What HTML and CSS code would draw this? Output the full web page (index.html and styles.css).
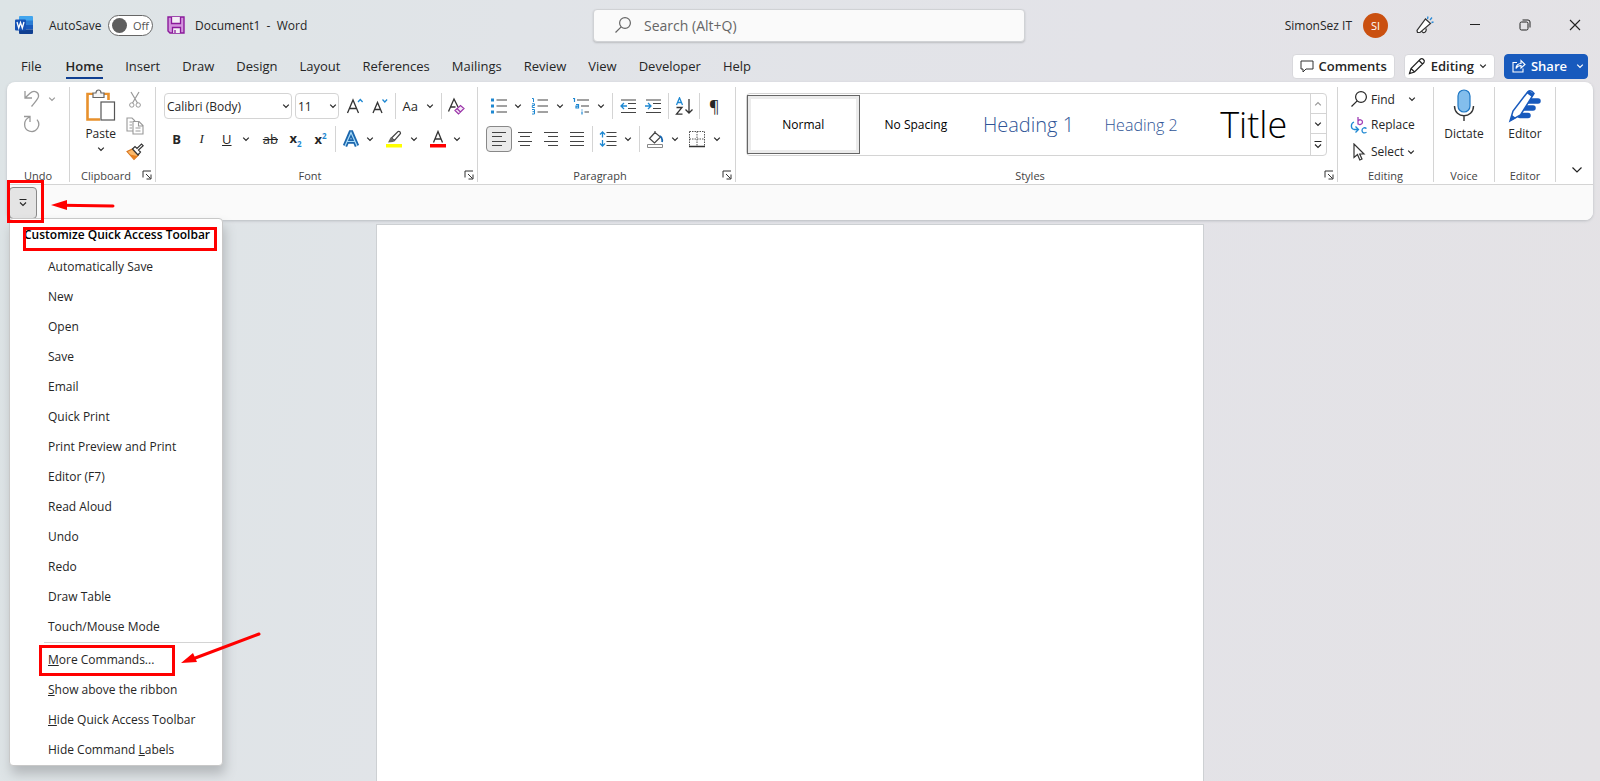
FILE: index.html
```html
<!DOCTYPE html>
<html lang="en">
    <head>
        <meta charset="UTF-8">
        <title>Document1 - Word</title>
        <link rel="stylesheet" href="styles.css">
    </head>
    <body>
        <svg class="defs" width="0" height="0" aria-hidden="true">
            <symbol id="chev" viewBox="0 0 8 8"><path d="M1.2 2.6 4 5.4 6.8 2.6" fill="none" stroke="currentColor" stroke-width="1.2"/></symbol>
            <symbol id="more" viewBox="0 0 10 10"><path d="M1.5 1.5h7M2 4.5l3 3 3-3" fill="none" stroke="currentColor" stroke-width="1.1"/></symbol>
            <symbol id="launch" viewBox="0 0 10 10"><path d="M1 7.5V1h8M4 4l4.5 4.5M9 4.5V9H4.5" fill="none" stroke="currentColor"/></symbol>
            <symbol id="glass" viewBox="0 0 18 18"><path d="M7.2 10.8 1.5 16.5" fill="none" stroke="currentColor" stroke-width="1.2"/><circle cx="11" cy="7" r="5.4" fill="none" stroke="currentColor" stroke-width="1.2"/></symbol>
        </svg>

        <header class="titlebar">
            <svg class="ic18" viewBox="0 0 18 18">
                <path d="M5 0h12a1 1 0 0 1 1 1v4H4V1a1 1 0 0 1 1-1z" fill="#41a5ee"/>
                <path d="M4 4.5h14V9H4z" fill="#2b7cd3"/>
                <path d="M4 9h14v4.500H4z" fill="#185abd"/>
                <path d="M4 13.500h14V17a1 1 0 0 1-1 1H5a1 1 0 0 1-1-1z" fill="#103f91"/>
                <rect x="0" y="3.500" width="11" height="11" rx="1" fill="#1753b5"/>
                <path d="M2 6l1.700 6L5.500 6.500 7.300 12 9 6" fill="none" stroke="#fff" stroke-width="1.300"/>
            </svg>
            <label class="switch"><span>AutoSave</span><span class="pill"><input type="checkbox" role="switch">Off</span></label>
            <button class="save" aria-label="Save">
                <svg class="ic18" viewBox="0 0 18 18"><path d="M1 1h16v16H3l-2-2z" fill="#d394dd" stroke="#8b1a9b" stroke-width="1.400"/><path d="M4.500 1v6.500h9V1M5.500 17v-5.500h8V17" fill="#f3eef5" stroke="#8b1a9b" stroke-width="1.300"/><path d="M8 17v-3" stroke="#8b1a9b" stroke-width="1.300"/></svg>
            </button>
            <span class="docname">Document1&nbsp; - &nbsp;Word</span>
            <label class="search">
                <svg class="ic18" viewBox="0 0 18 18"><use href="#glass"/></svg>
                <input type="text" placeholder="Search (Alt+Q)" aria-label="Search">
            </label>
            <div class="account">
                <span>SimonSez IT</span>
                <span class="avatar">SI</span>
                <button class="win" aria-label="Coming soon">
                    <svg class="ic18" viewBox="0 0 18 18"><path d="M1.500 16.500 1 14.500 9.500 3l5 4.500L4 16.500zM6 15.500c1.500 2.500 5 .5 4-3" fill="#fff" stroke="#333" stroke-width="1.200"/><path d="M11.500 3 12 .5M14 4l2-2.500M15.500 6.500l2-.500" stroke="#2b8ad6" stroke-width="1.300"/></svg>
                </button>
                <button class="win" aria-label="Minimize"><svg class="ic12" viewBox="0 0 12 12"><path d="M1 5.500h10" stroke="#222"/></svg></button>
                <button class="win" aria-label="Restore"><svg class="ic12" viewBox="0 0 12 12"><rect x="1" y="3" width="8" height="8" rx="1.500" fill="none" stroke="#222"/><path d="M3.500 1H9a2 2 0 0 1 2 2v5.500" fill="none" stroke="#222"/></svg></button>
                <button class="win" aria-label="Close"><svg class="ic12" viewBox="0 0 12 12"><path d="M1 1l10 10M11 1 1 11" stroke="#222" stroke-width="1.100"/></svg></button>
            </div>
        </header>

        <nav class="tabs">
            <a href="#file">File</a>
            <a href="#home" class="active">Home</a>
            <a href="#insert">Insert</a>
            <a href="#draw">Draw</a>
            <a href="#design">Design</a>
            <a href="#layout">Layout</a>
            <a href="#references">References</a>
            <a href="#mailings">Mailings</a>
            <a href="#review">Review</a>
            <a href="#view">View</a>
            <a href="#developer">Developer</a>
            <a href="#help">Help</a>
            <div class="actions">
                <button class="action"><svg class="ic14" viewBox="0 0 14 14"><path d="M1 2h12v8H6l-3 3v-3H1z" fill="none" stroke="#333"/></svg>Comments</button>
                <button class="action mode"><svg class="ic18" viewBox="0 0 18 18"><path d="M1.500 16.500l1.500-5L12.500 2q1.500-1 3 .5t.5 3L6.500 15zM3 11.500 6.500 15M11 3.500 14.500 7" fill="none" stroke="#222" stroke-width="1.200"/></svg>Editing<svg class="ic8"><use href="#chev"/></svg></button>
                <button class="action share"><svg class="ic14" viewBox="0 0 14 14"><path d="M5 3.500H1v9.500h10V9.500M4 9.500c0-3 2-5 5-5V1.500L13 5.500 9 9V6.500C7 6.500 5 7.500 4 9.500z" fill="none" stroke="#fff" stroke-width="1.100"/></svg>Share<svg class="ic8"><use href="#chev"/></svg></button>
            </div>
        </nav>

        <main class="ribbon">
            <div class="groups">
                <section class="group undo">
                    <div class="body">
                        <div class="pair">
                            <button class="tb grey" aria-label="Undo"><svg class="ic18" viewBox="0 0 18 18"><path d="M2 1v7h7M2 8 7 3.300C11-.5 16 2 15.500 6.500 15.200 9 12 12 8.500 16.500" fill="none" stroke="currentColor" stroke-width="1.300"/></svg></button>
                            <button class="chev grey" aria-label="Undo list"><svg class="ic8"><use href="#chev"/></svg></button>
                        </div>
                        <button class="tb grey" aria-label="Redo"><svg class="ic18" viewBox="0 0 18 18"><path d="M1 1.500h6V7M6.500 2C0 5 0 14 6.500 16.200c7 2 12-6 7.500-11.500" fill="none" stroke="currentColor" stroke-width="1.300"/></svg></button>
                    </div>
                    <div class="foot"><span>Undo</span></div>
                </section>

                <section class="group clip">
                    <div class="body">
                        <button class="big">
                            <svg width="30" height="34" viewBox="0 0 30 34"><path d="M7 5H1.500v25.500H14M17 5h5.500v6" fill="none" stroke="#e8912d" stroke-width="2.600"/><path d="M3 6h18v6h-6v17H3z" fill="#fff"/><path d="M7 8.500V4h3c0-4 5-4 5 0h3v4.500z" fill="#f5f5f5" stroke="#666" stroke-width="1.200"/><rect x="15" y="13" width="13.500" height="18" fill="#fff" stroke="#555" stroke-width="1.200"/></svg>
                            Paste
                            <svg class="ic8"><use href="#chev"/></svg>
                        </button>
                        <div class="stack">
                            <button class="tb grey" aria-label="Cut"><svg class="ic18" viewBox="0 0 18 18"><path d="M5 1l6.500 11M13 1 6.500 12" stroke="currentColor" stroke-width="1.200"/><circle cx="5.800" cy="14" r="2.200" fill="none" stroke="currentColor"/><circle cx="12.200" cy="14" r="2.200" fill="none" stroke="currentColor"/></svg></button>
                            <button class="tb grey" aria-label="Copy"><svg class="ic18" viewBox="0 0 18 18"><path d="M7 14H1V1h5l3 3M7 4.500h6l4 4V17H7zM12.500 5v4H17M9.500 11h5M9.500 14h5M3.500 5H6M3.500 8H6M3.500 11H6" fill="none" stroke="currentColor" stroke-width="1.100"/></svg></button>
                            <button class="tb" aria-label="Format Painter"><svg class="ic18" viewBox="0 0 18 18"><path d="M1 8.500 6.500 6l6 6-4.500 4.500z" fill="#fbb96c" stroke="#d9741a" stroke-width="1.100"/><path d="M4 11.500 8 16l3-3z" fill="#e8801e"/><path d="M6.500 6 9 3.500l2 2L15.500 1l1.700 1.700L12.500 7l2 2-2.500 3z" fill="#fff" stroke="#333" stroke-width="1.200"/></svg></button>
                        </div>
                    </div>
                    <div class="foot"><span>Clipboard</span><button class="launch" aria-label="Clipboard settings"><svg class="ic10"><use href="#launch"/></svg></button></div>
                </section>

                <section class="group font">
                    <div class="body rows">
                        <div class="row">
                            <span class="pick family"><select aria-label="Font"><option>Calibri (Body)</option></select><svg class="ic8"><use href="#chev"/></svg></span>
                            <span class="pick size"><select aria-label="Font size"><option>11</option></select><svg class="ic8"><use href="#chev"/></svg></span>
                            <button class="tb" aria-label="Increase Font Size"><svg class="ic18" viewBox="0 0 18 18"><path d="M1.500 16 7 3l5.500 13M3.300 11.500h7.400" fill="none" stroke="#333" stroke-width="1.300"/><path d="M12 5l2.300-2.500L16.600 5" fill="none" stroke="#1e88d2" stroke-width="1.300"/></svg></button>
                            <button class="tb" aria-label="Decrease Font Size"><svg class="ic18" viewBox="0 0 18 18"><path d="M2 16 6.500 5.500 11 16M3.500 12.500h6" fill="none" stroke="#333" stroke-width="1.300"/><path d="M11.500 2.500 13.800 5l2.300-2.500" fill="none" stroke="#1e88d2" stroke-width="1.300"/></svg></button>
                            <i class="sep"></i>
                            <button class="tb case">Aa</button>
                            <button class="chev" aria-label="Case options"><svg class="ic8"><use href="#chev"/></svg></button>
                            <i class="sep"></i>
                            <button class="tb" aria-label="Clear Formatting"><svg class="ic18" viewBox="0 0 18 18"><path d="M1.500 14.500 7 2l4 8M3.500 10h5" fill="none" stroke="#333" stroke-width="1.300"/><path d="M8 13.500 13.500 8.500 17 11.500 11.500 17zM10 11.500l3.500 3.500" fill="#f6eaf8" stroke="#9a33a8" stroke-width="1.200"/></svg></button>
                        </div>
                        <div class="row wide">
                            <button class="tb"><b>B</b></button>
                            <button class="tb ital"><i>I</i></button>
                            <button class="tb"><u>U</u></button>
                            <button class="chev" aria-label="Underline options"><svg class="ic8"><use href="#chev"/></svg></button>
                            <button class="tb"><s>ab</s></button>
                            <button class="tb"><b>x<sub>2</sub></b></button>
                            <button class="tb"><b>x<sup>2</sup></b></button>
                            <i class="sep"></i>
                            <button class="tb" aria-label="Text Effects"><svg class="ic18" viewBox="0 0 18 18"><path d="M3 16 8.700 2.500h.6L15 16M5.500 11.500h7" fill="none" stroke="#1b66ad" stroke-width="4.500"/><path d="M3 16 9 2.500 15 16M5.500 11.500h7" fill="none" stroke="#a9dbf8" stroke-width="1.200"/></svg></button>
                            <button class="chev" aria-label="Effect options"><svg class="ic8"><use href="#chev"/></svg></button>
                            <button class="tb" aria-label="Highlight"><svg class="ic18" viewBox="0 0 18 18"><path d="M6.500 8 13 1.500q2.500-.5 2.500 2L9.500 10.500z" fill="#fff" stroke="#444" stroke-width="1.200"/><path d="M5.500 7.500 10 11l-2 1-5 .5z" fill="#666"/><path d="M1 14h16v3.500H1z" fill="#ff0"/></svg></button>
                            <button class="chev" aria-label="Highlight colors"><svg class="ic8"><use href="#chev"/></svg></button>
                            <button class="tb" aria-label="Font Color"><svg class="ic18" viewBox="0 0 18 18"><path d="M4.500 12.500 9 1.500l4.500 11M6 9h6" fill="none" stroke="#333" stroke-width="1.300"/><path d="M1 14h16v3.500H1z" fill="#f00"/></svg></button>
                            <button class="chev" aria-label="Font colors"><svg class="ic8"><use href="#chev"/></svg></button>
                        </div>
                    </div>
                    <div class="foot"><span>Font</span><button class="launch" aria-label="Font settings"><svg class="ic10"><use href="#launch"/></svg></button></div>
                </section>

                <section class="group para">
                    <div class="body rows">
                        <div class="row">
                            <button class="tb" aria-label="Bullets"><svg class="ic18" viewBox="0 0 18 18"><path d="M1 1.500h3v3H1zM1 7.500h3v3H1zM1 13.500h3v3H1z" fill="#1e88d2"/><path d="M6.500 3H17M6.500 9H17M6.500 15H17" stroke="#444" stroke-width="1.200"/></svg></button>
                            <button class="chev" aria-label="Bullet library"><svg class="ic8"><use href="#chev"/></svg></button>
                            <button class="tb" aria-label="Numbering"><svg class="ic18" viewBox="0 0 18 18"><path d="M1 1.500h1.500V5M1 6.800h2.500v1.700H1.300v2h2.500M1 12.500h2.500v4.500H1M1.500 14.700h2" fill="none" stroke="#1e88d2"/><path d="M6.500 3H17M6.500 9H17M6.500 15H17" stroke="#444" stroke-width="1.200"/></svg></button>
                            <button class="chev" aria-label="Numbering library"><svg class="ic8"><use href="#chev"/></svg></button>
                            <button class="tb" aria-label="Multilevel List"><svg class="ic18" viewBox="0 0 18 18"><path d="M1 1.500h1.500V5M4 7.500h2.500V11H4V9.200h2.500M10 12.500v1M10 14.500v3" fill="none" stroke="#1e88d2" stroke-width="1.200"/><path d="M5 3h12M9 9h8M12.500 15H17" stroke="#444" stroke-width="1.200"/></svg></button>
                            <button class="chev" aria-label="List library"><svg class="ic8"><use href="#chev"/></svg></button>
                            <i class="sep"></i>
                            <button class="tb" aria-label="Decrease Indent"><svg class="ic18" viewBox="0 0 18 18"><path d="M2 3h15M9 6.500h8M9 11.500h8M2 15.500h15" stroke="#444" stroke-width="1.200"/><path d="M8 9H2m3-3L2 9l3 3" fill="none" stroke="#1e88d2" stroke-width="1.300"/></svg></button>
                            <button class="tb" aria-label="Increase Indent"><svg class="ic18" viewBox="0 0 18 18"><path d="M2 3h15M9 6.500h8M9 11.500h8M2 15.500h15" stroke="#444" stroke-width="1.200"/><path d="M1 9h6M4 6l3 3-3 3" fill="none" stroke="#1e88d2" stroke-width="1.300"/></svg></button>
                            <i class="sep"></i>
                            <button class="tb" aria-label="Sort"><svg class="ic18" viewBox="0 0 18 18"><path d="M1.500 8 4.500.8 7.500 8M2.500 5.500h4" fill="none" stroke="#1e88d2" stroke-width="1.300"/><path d="M1.500 10.500h5.500l-5.500 6.700h6M14 2v14M10.500 12.500 14 16l3.500-3.500" fill="none" stroke="#333" stroke-width="1.300"/></svg></button>
                            <i class="sep"></i>
                            <button class="tb pil">¶</button>
                        </div>
                        <div class="row">
                            <button class="tb on" aria-label="Align Left"><svg class="ic18" viewBox="0 0 18 18"><path d="M2 2.500h14M2 6.500h10M2 11.500h14M2 15.500h10" stroke="#444" stroke-width="1.200"/></svg></button>
                            <button class="tb" aria-label="Center"><svg class="ic18" viewBox="0 0 18 18"><path d="M2 2.500h14M4 6.500h10M2 11.500h14M4 15.500h10" stroke="#444" stroke-width="1.200"/></svg></button>
                            <button class="tb" aria-label="Align Right"><svg class="ic18" viewBox="0 0 18 18"><path d="M2 2.500h14M6 6.500h10M2 11.500h14M6 15.500h10" stroke="#444" stroke-width="1.200"/></svg></button>
                            <button class="tb" aria-label="Justify"><svg class="ic18" viewBox="0 0 18 18"><path d="M2 2.500h14M2 6.500h14M2 11.500h14M2 15.500h14" stroke="#444" stroke-width="1.200"/></svg></button>
                            <i class="sep"></i>
                            <button class="tb" aria-label="Line Spacing"><svg class="ic18" viewBox="0 0 18 18"><path d="M7.500 2.500h10M7.500 6.500h10M7.500 11.500h10M7.500 15.500h10" stroke="#444" stroke-width="1.200"/><path d="M3.500 2v5.500M1 4.500 3.500 2 6 4.500M3.500 10v6M1 13.500 3.500 16 6 13.500" fill="none" stroke="#1e88d2" stroke-width="1.300"/></svg></button>
                            <button class="chev" aria-label="Spacing options"><svg class="ic8"><use href="#chev"/></svg></button>
                            <i class="sep"></i>
                            <button class="tb" aria-label="Shading"><svg class="ic18" viewBox="0 0 18 18"><path d="M9 1v3M9 2.500 3.500 8.500l5 4.500 6-6z" fill="#fff" stroke="#444" stroke-width="1.200"/><path d="M14 6q3 2 2 6" fill="none" stroke="#1566b0" stroke-width="1.800"/><path d="M1.500 14.500h15v3h-15z" fill="#fff" stroke="#888"/></svg></button>
                            <button class="chev" aria-label="Shading colors"><svg class="ic8"><use href="#chev"/></svg></button>
                            <button class="tb" aria-label="Borders"><svg class="ic18" viewBox="0 0 18 18"><path d="M1.500 1.500h15M1.500 1.500v14M16.500 1.500v14M9 1.500v14M1.500 9h15" stroke="#555" stroke-dasharray="1.500 1"/><path d="M1 16.500h16" stroke="#333" stroke-width="1.500"/></svg></button>
                            <button class="chev" aria-label="Border options"><svg class="ic8"><use href="#chev"/></svg></button>
                        </div>
                    </div>
                    <div class="foot"><span>Paragraph</span><button class="launch" aria-label="Paragraph settings"><svg class="ic10"><use href="#launch"/></svg></button></div>
                </section>

                <section class="group styles">
                    <div class="body">
                        <div class="gallery">
                            <button class="style normal">Normal</button>
                            <button class="style">No Spacing</button>
                            <button class="style h1">Heading 1</button>
                            <button class="style h2">Heading 2</button>
                            <button class="style title">Title</button>
                            <div class="scroll">
                                <button class="grey" aria-label="Previous styles"><svg class="ic8 up"><use href="#chev"/></svg></button>
                                <button aria-label="Next styles"><svg class="ic8"><use href="#chev"/></svg></button>
                                <button aria-label="All styles"><svg class="ic10"><use href="#more"/></svg></button>
                            </div>
                        </div>
                    </div>
                    <div class="foot"><span>Styles</span><button class="launch" aria-label="Styles settings"><svg class="ic10"><use href="#launch"/></svg></button></div>
                </section>

                <section class="group editing">
                    <div class="body">
                        <button class="cmd find"><svg class="ic18"><use href="#glass"/></svg>Find<svg class="ic8"><use href="#chev"/></svg></button>
                        <button class="cmd"><svg class="ic18" viewBox="0 0 18 18"><path d="M8 1v7.500M8 5c1-2 4.500-1.500 4.500 1S9 9.500 8 7.500" fill="none" stroke="#a13fb5" stroke-width="1.300"/><path d="M16.500 12.500c-2-1.500-4.500-.5-4.500 2s2.500 3 4.500 1.800M4 6C.5 7.500.5 12.500 4 13.500h4M5.500 10.500l3 3-3 3" fill="none" stroke="#1e88d2" stroke-width="1.300"/></svg>Replace</button>
                        <button class="cmd"><svg class="ic18" viewBox="0 0 18 18"><path d="M4 1v13.500l3.500-3 2.300 5.500 2.200-1-2.300-5H14z" fill="#fff" stroke="#333" stroke-width="1.200"/></svg>Select<svg class="ic8"><use href="#chev"/></svg></button>
                    </div>
                    <div class="foot"><span>Editing</span></div>
                </section>

                <section class="group single">
                    <div class="body">
                        <button class="big"><svg width="22" height="34" viewBox="0 0 22 34"><rect x="5" y="1" width="12" height="22" rx="6" fill="#83beec" stroke="#1e77c4" stroke-width="1.200"/><path d="M1.500 17c0 13 19 13 19 0M11 26.500V32" fill="none" stroke="#333" stroke-width="1.400"/></svg>Dictate</button>
                    </div>
                    <div class="foot"><span>Voice</span></div>
                </section>

                <section class="group single">
                    <div class="body">
                        <button class="big"><svg width="34" height="34" viewBox="0 0 34 34"><path d="M20 12h10M16 19h9M12 26.500h8" stroke="#185abd" stroke-width="5.500" stroke-linecap="round"/><path d="M2 32l3-10L20 2.500q3-2 6 2L12.500 26z" fill="#fff" stroke="#185abd" stroke-width="1.500"/><path d="M2 32l2-6 4 3zM18.500 4 21 1.500l5 3.500-2 3z" fill="#185abd"/></svg>Editor</button>
                    </div>
                    <div class="foot"><span>Editor</span></div>
                </section>

                <button class="collapse" aria-label="Collapse ribbon"><svg class="ic12" viewBox="0 0 12 12"><path d="M1.500 3.500 6 8l4.500-4.500" fill="none" stroke="#222" stroke-width="1.200"/></svg></button>
            </div>

            <div class="qat">
                <button class="qat-btn" aria-label="Customize Quick Access Toolbar"><svg class="ic10"><use href="#more"/></svg></button>
                <div class="menu">
                    <h2>Customize Quick Access Toolbar</h2>
                    <button>Automatically Save</button>
                    <button>New</button>
                    <button>Open</button>
                    <button>Save</button>
                    <button>Email</button>
                    <button>Quick Print</button>
                    <button>Print Preview and Print</button>
                    <button>Editor (F7)</button>
                    <button>Read Aloud</button>
                    <button>Undo</button>
                    <button>Redo</button>
                    <button>Draw Table</button>
                    <button>Touch/Mouse Mode</button>
                    <hr>
                    <button><u>M</u>ore Commands...</button>
                    <button><u>S</u>how above the ribbon</button>
                    <button><u>H</u>ide Quick Access Toolbar</button>
                    <button>Hide Command <u>L</u>abels</button>
                </div>
            </div>
        </main>

        <div class="workspace">
            <div class="page"></div>
        </div>

        <svg class="marks" width="280" height="700" aria-hidden="true">
            <g fill="none" stroke="#f00" stroke-width="3">
                <rect x="8.500" y="181.500" width="34" height="40"/>
                <rect x="24.500" y="228.500" width="191" height="21"/>
                <rect x="40.500" y="646.500" width="133" height="28"/>
                <path d="M62 205.300 113 206M190 660 259 634" stroke-linecap="round"/>
            </g>
            <path d="M51 205l16-5v10zM181 663l12-10 4 9z" fill="#f00"/>
        </svg>
    </body>
</html>
```

FILE: styles.css
```css
*{
    box-sizing: border-box;
}

body{
    margin: 0;
    height: 100vh;
    overflow: hidden;
    position: relative;
    display: flex;
    flex-direction: column;
    font-family: "Open Sans", "Noto Sans", sans-serif;
    font-size: 12px;
    color: #262626;
    background: linear-gradient(100deg, #dde4e6 0%, #e1e4e8 30%, #e3e3e8 65%, #e4e2e5 100%);
}

button, input, select{
    font: inherit;
    color: inherit;
}

button{
    display: flex;
    align-items: center;
    justify-content: center;
    padding: 0;
    border: 0;
    background: none;
}

svg{
    flex: none;
}

.defs{
    position: absolute;
}

.ic8{
    width: 8px;
    height: 8px;
}

.ic10{
    width: 10px;
    height: 10px;
}

.ic12{
    width: 12px;
    height: 12px;
}

.ic14{
    width: 14px;
    height: 14px;
}

.ic18{
    width: 18px;
    height: 18px;
}

.grey{
    color: #999;
}

/* title bar */
.titlebar{
    height: 50px;
    padding-left: 15px;
    display: grid;
    grid-template-columns: 34px 118px 28px 9fr 432px 13fr;
    align-items: center;
}

.switch{
    display: flex;
    align-items: center;
    justify-content: space-between;
    margin-right: 14px;
}

.pill{
    display: flex;
    align-items: center;
    gap: 6px;
    width: 45px;
    height: 21px;
    padding-left: 3px;
    border: 1px solid #666;
    border-radius: 11px;
    background: #fff;
    font-size: 11px;
    color: #555;
}

.pill input{
    appearance: none;
    width: 15px;
    height: 15px;
    margin: 0;
    border-radius: 50%;
    background: #5f5f5f;
}

.save{
    justify-content: flex-start;
}

.search{
    display: flex;
    align-items: center;
    gap: 10px;
    height: 33px;
    padding-left: 20px;
    border: 1px solid #d0d2d5;
    border-radius: 4px;
    background: #fafafa;
    box-shadow: 0 1px 2px #bbbdc0;
    color: #666;
}

.search input{
    flex: 1;
    border: 0;
    background: none;
    font-size: 14px;
}

.search input::placeholder{
    color: #666;
}

.account{
    display: flex;
    align-items: center;
    justify-content: flex-end;
}

.avatar{
    width: 25px;
    height: 25px;
    line-height: 25px;
    margin: 0 12px 0 11px;
    border-radius: 50%;
    background: #ca5010;
    color: #fff;
    font-size: 11px;
    text-align: center;
}

.win{
    width: 50px;
    height: 30px;
}

/* tabs */
.tabs{
    display: flex;
    align-items: center;
    gap: 22px;
    height: 32px;
    padding: 0 12px 0 21px;
    font-size: 13px;
}

.tabs a{
    height: 26px;
    line-height: 26px;
    color: #262626;
    text-decoration: none;
}

.tabs .active{
    margin-left: 2px;
    font-weight: 600;
    border-bottom: 2px solid #103f91;
}

.actions{
    display: flex;
    gap: 9px;
    margin-left: auto;
}

.action{
    height: 25px;
    padding: 0 7px;
    gap: 5px;
    border: 1px solid #d8d8dc;
    border-radius: 4px;
    background: #fff;
    font-weight: 600;
}

.mode{
    padding: 0 7px 0 3px;
}

.share{
    border-color: #185abd;
    background: #185abd;
    color: #fff;
}

.share .ic8{
    margin-left: 4px;
    margin-right: -4px;
}

/* ribbon */
.ribbon{
    margin: 0 7px;
    border-radius: 8px;
    background: #fff;
    box-shadow: 0 1px 3px #b9bcc0;
}

.groups{
    display: flex;
    height: 103px;
    padding: 5px 0 2px;
    border-bottom: 1px solid #d4d4d4;
}

.group{
    display: flex;
    flex-direction: column;
    justify-content: space-between;
    border-right: 1px solid #d4d4d4;
}

.body{
    display: flex;
}

.foot{
    display: flex;
    align-items: center;
    height: 14px;
    padding-right: 3px;
    font-size: 11px;
    color: #444;
}

.foot span{
    flex: 1;
    text-align: center;
}

.launch{
    width: 10px;
    height: 14px;
    color: #333;
}

.tb{
    width: 26px;
    height: 26px;
    font-size: 13px;
}

.chev{
    width: 14px;
    height: 26px;
    margin-right: 2px;
}

.wide .chev{
    margin-right: 5px;
}

.on{
    border: 1px solid #888;
    border-radius: 4px;
    background: #ebebeb;
}

.sep{
    width: 1px;
    height: 26px;
    margin: 0 2px;
    background: #d4d4d4;
}

.rows{
    flex-direction: column;
    gap: 7px;
    padding: 6px 8px 0;
}

.row{
    display: flex;
}

.undo{
    width: 63px;
}

.undo .body{
    flex-direction: column;
    padding-left: 12px;
}

.undo .foot{
    padding: 0;
}

.pair{
    display: flex;
}

.pair .tb, .pair .chev{
    height: 24px;
}

.clip{
    width: 86px;
}

.clip .body{
    justify-content: flex-end;
    gap: 6px;
    padding-right: 7px;
}

.big{
    flex-direction: column;
    justify-content: flex-start;
    gap: 3px;
    margin-top: 2px;
    line-height: 16px;
}

.font{
    width: 322px;
}

.para{
    width: 258px;
}

.pick{
    position: relative;
    height: 26px;
    margin-right: 3px;
}

.pick select{
    appearance: none;
    width: 100%;
    height: 26px;
    padding: 0 2px;
    border: 1px solid #d4d4d4;
    border-radius: 4px;
    background: #fff;
}

.pick svg{
    position: absolute;
    right: 2px;
    top: 9px;
}

.family{
    width: 131px;
}

.size{
    width: 45px;
}

.ital{
    font-family: "Liberation Serif", serif;
}

.tb sub, .tb sup{
    font-size: 8px;
    color: #1e88d2;
}

.pil{
    font-size: 16px;
}

.styles{
    flex: 1;
}

.styles .body{
    padding: 6px 10px 0;
}

.gallery{
    flex: 1;
    display: grid;
    grid-template-columns: repeat(5, 1fr) 16px;
    height: 63px;
    border: 1px solid #d4d4d4;
    border-radius: 4px;
}

.style{
    color: #000;
    white-space: nowrap;
}

.normal{
    margin: 1px 0;
    border: 1px solid #666;
    outline: 3px solid #ebebeb;
    outline-offset: -4px;
}

.h1, .h2{
    color: #2f5496;
    font-weight: 300;
    font-size: 20px;
}

.h2{
    font-size: 16px;
}

.title{
    font-weight: 300;
    font-size: 36px;
    line-height: 40px;
}

.scroll{
    display: grid;
    border-left: 1px solid #d4d4d4;
}

.scroll button + button{
    border-top: 1px solid #d4d4d4;
}

.up{
    transform: rotate(180deg);
}

.editing{
    width: 96px;
}

.editing .body{
    flex-direction: column;
    padding-left: 12px;
}

.cmd{
    justify-content: flex-start;
    height: 27px;
    gap: 3px;
}

.find{
    height: 24px;
}

.find .ic8{
    margin-left: 10px;
}

.single{
    width: 61px;
}

.single .body{
    justify-content: center;
}

.single .foot, .editing .foot{
    padding: 0;
}

.collapse{
    width: 37px;
    align-items: flex-end;
    padding: 0 0 6px 4px;
}

.qat{
    position: relative;
    height: 35px;
    padding: 2px;
    border-radius: 0 0 8px 8px;
    background: #fafafa;
}

.qat-btn{
    width: 28px;
    height: 32px;
    border: 1px solid #888;
    border-radius: 4px;
    background: #e4e4e4;
}

.menu{
    position: absolute;
    left: 2px;
    top: 33px;
    width: 214px;
    padding-bottom: 1px;
    border: 1px solid #c8c8c8;
    border-radius: 4px;
    background: #fff;
    box-shadow: 2px 8px 12px #b4b8bb;
}

.menu h2{
    margin: 0;
    height: 32px;
    line-height: 32px;
    padding-left: 14px;
    font-size: 12px;
    font-weight: 600;
    color: #000;
    white-space: nowrap;
}

.menu button{
    justify-content: flex-start;
    width: 100%;
    height: 30px;
    padding-left: 38px;
    white-space: pre;
}

.menu hr{
    height: 1px;
    margin: 1px 0 1px 34px;
    border: 0;
    background: #d4d4d4;
}

/* document */
.workspace{
    flex: 1;
    display: flex;
    justify-content: center;
    padding: 4px 20px 0 0;
}

.page{
    width: 828px;
    border: 1px solid #cdd0d3;
    border-bottom: 0;
    background: #fff;
}

/* red boxes and arrows over the menu */
.marks{
    position: absolute;
    left: 0;
    top: 0;
    pointer-events: none;
}
```
